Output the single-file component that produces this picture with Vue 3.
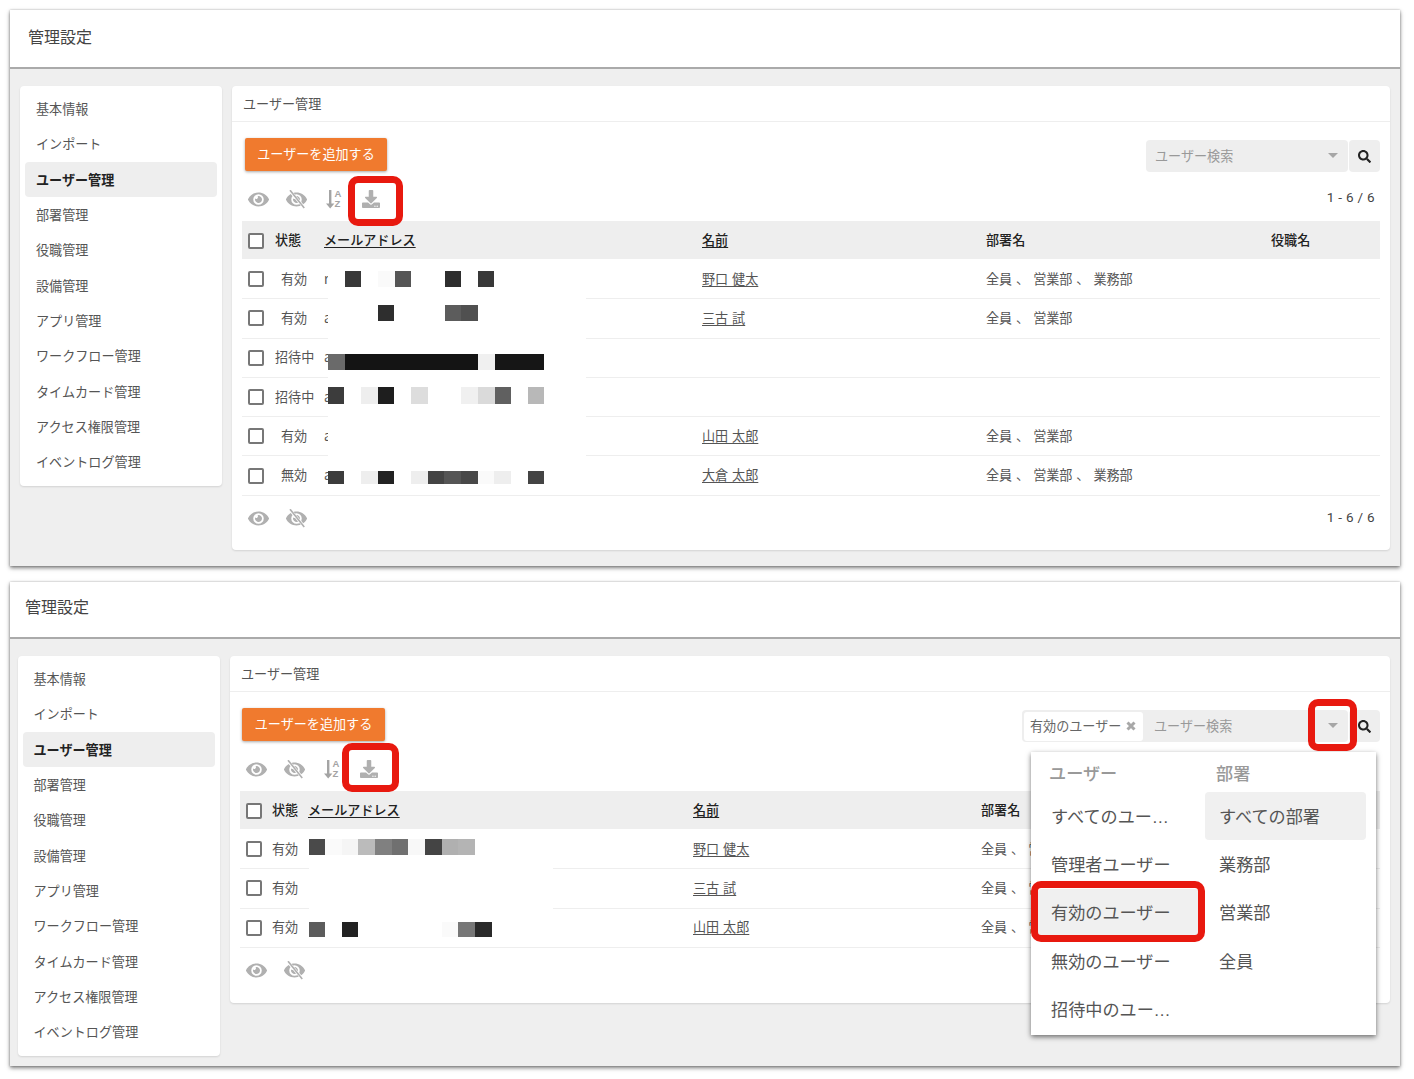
<script setup>
const eye = 'M572.52 241.4C518.29 135.59 410.93 64 288 64S57.68 135.64 3.48 241.41a32.35 32.35 0 0 0 0 29.19C57.71 376.41 165.07 448 288 448s230.32-71.64 284.52-177.41a32.35 32.35 0 0 0 0-29.19zM288 400a144 144 0 1 1 144-144 143.93 143.93 0 0 1-144 144zm0-240a95.31 95.31 0 0 0-25.31 3.79 47.85 47.85 0 0 1-66.9 66.9A95.78 95.78 0 1 0 288 160z'
const download = 'M216 0h80c13.3 0 24 10.7 24 24v168h87.7c17.8 0 26.7 21.5 14.1 34.1L269.7 378.3c-7.5 7.5-19.8 7.5-27.3 0L90.1 226.1c-12.6-12.6-3.7-34.1 14.1-34.1H192V24c0-13.3 10.7-24 24-24zm296 376v112c0 13.3-10.7 24-24 24H24c-13.3 0-24-10.7-24-24V376c0-13.3 10.7-24 24-24h146.7l49 49c20.1 20.1 52.5 20.1 72.6 0l49-49H488c13.3 0 24 10.7 24 24zm-124 88c0-11-9-20-20-20s-20 9-20 20 9 20 20 20 20-9 20-20zm64 0c0-11-9-20-20-20s-20 9-20 20 9 20 20 20 20-9 20-20z'
const search = 'M505 442.7L405.3 343c-4.5-4.5-10.6-7-17-7H372c27.6-35.3 44-79.7 44-128C416 93.1 322.9 0 208 0S0 93.1 0 208s93.1 208 208 208c48.3 0 92.7-16.4 128-44v16.3c0 6.4 2.5 12.5 7 17l99.7 99.7c9.4 9.4 24.6 9.4 33.9 0l28.3-28.3c9.4-9.4 9.4-24.6.1-34zM208 336c-70.7 0-128-57.2-128-128 0-70.7 57.2-128 128-128 70.7 0 128 57.2 128 128 0 70.7-57.2 128-128 128z'

const menu = ['基本情報', 'インポート', 'ユーザー管理', '部署管理', '役職管理', '設備管理', 'アプリ管理', 'ワークフロー管理', 'タイムカード管理', 'アクセス権限管理', 'イベントログ管理']

const b = (x, w, c) => ({ x, w, c })
const topMosaic = {
  box: { left: 328, top: 260, width: 258, height: 235 },
  strips: [
    { y: 271, h: 16, blocks: [b(345, 16, '#383838'), b(378, 17, '#fafafa'), b(395, 16, '#555'), b(445, 16, '#2e2e2e'), b(478, 16, '#383838')] },
    { y: 305, h: 16, blocks: [b(378, 16, '#2e2e2e'), b(445, 16, '#5c5c5c'), b(461, 17, '#505050')] },
    { y: 354, h: 16, blocks: [b(328, 17, '#6a6a6a'), b(345, 133, '#141414'), b(478, 17, '#f0f0f0'), b(495, 49, '#161616')] },
    { y: 387, h: 17, blocks: [b(328, 16, '#3c3c3c'), b(361, 17, '#eee'), b(378, 16, '#1e1e1e'), b(411, 17, '#ddd'), b(461, 17, '#f0f0f0'), b(478, 17, '#dadada'), b(495, 16, '#606060'), b(528, 16, '#b8b8b8')] },
    { y: 471, h: 13, blocks: [b(328, 16, '#3c3c3c'), b(361, 17, '#eee'), b(378, 16, '#222'), b(411, 17, '#eee'), b(428, 16, '#444'), b(444, 17, '#555'), b(461, 17, '#484848'), b(478, 16, '#fafafa'), b(494, 17, '#eee'), b(528, 16, '#444')] }
  ]
}
const bottomMosaic = {
  box: { left: 309, top: 830, width: 244, height: 117 },
  strips: [
    { y: 839, h: 16, blocks: [b(309, 16, '#4a4a4a'), b(325, 17, '#fafafa'), b(342, 16, '#f5f5f5'), b(358, 17, '#bbb'), b(375, 17, '#808080'), b(392, 16, '#707070'), b(408, 17, '#f8f8f8'), b(425, 17, '#444'), b(442, 16, '#b0b0b0'), b(458, 17, '#b4b4b4')] },
    { y: 922, h: 15, blocks: [b(309, 16, '#5c5c5c'), b(342, 16, '#222'), b(442, 16, '#fafafa'), b(458, 17, '#777'), b(475, 17, '#2a2a2a')] }
  ]
}

const panels = [
  {
    key: 'top',
    mosaic: topMosaic,
    filtered: false,
    rows: [
      { s: '有効', m: 'r', n: '野口 健太', d: '全員 、 営業部 、 業務部' },
      { s: '有効', m: 'a', n: '三古 試', d: '全員 、 営業部' },
      { s: '招待中', m: 'a', n: '', d: '' },
      { s: '招待中', m: 'a', n: '', d: '' },
      { s: '有効', m: 'a', n: '山田 太郎', d: '全員 、 営業部' },
      { s: '無効', m: 'a', n: '大倉 太郎', d: '全員 、 営業部 、 業務部' }
    ]
  },
  {
    key: 'bottom',
    mosaic: bottomMosaic,
    filtered: true,
    rows: [
      { s: '有効', m: '', n: '野口 健太', d: '全員 、 営業部 、 業務部' },
      { s: '有効', m: '', n: '三古 試', d: '全員 、 営業部' },
      { s: '有効', m: '', n: '山田 太郎', d: '全員 、 営業部' }
    ]
  }
]

const usersMenu = ['すべてのユーザー', '管理者ユーザー', '有効のユーザー', '無効のユーザー', '招待中のユーザー']
const deptMenu = ['すべての部署', '業務部', '営業部', '全員']

const boxStyle = (box) => ({ left: box.left + 'px', top: box.top + 'px', width: box.width + 'px', height: box.height + 'px' })
const blockStyle = (box, strip, block) => ({
  left: block.x - box.left + 'px',
  top: strip.y - box.top + 'px',
  width: block.w + 'px',
  height: strip.h + 'px',
  background: block.c
})
</script>

<template>
  <div class="page">
    <section v-for="p in panels" :key="p.key" class="win" :class="'win-' + p.key">
      <header class="win-head">管理設定</header>
      <div class="win-body">
        <nav class="side">
          <a v-for="m in menu" :key="m" class="side-item" :class="{ active: m === 'ユーザー管理' }">{{ m }}</a>
        </nav>
        <main class="card">
          <div class="card-head">ユーザー管理</div>
          <div class="card-body">
            <div class="bar">
              <button class="add">ユーザーを追加する</button>
              <div class="search">
                <div class="field">
                  <span v-if="p.filtered" class="chip">有効のユーザー<svg class="chip-x" viewBox="0 0 10 10"><path d="M1.5 1.5l7 7M8.5 1.5l-7 7" /></svg></span>
                  <span class="ph">ユーザー検索</span>
                  <span class="caret"></span>
                </div>
                <button class="go">
                  <svg viewBox="0 0 512 512" width="13" height="13"><path :d="search" fill="#222" /></svg>
                </button>
              </div>
            </div>

            <div class="tools">
              <svg class="ic-eye" viewBox="0 0 576 512"><path :d="eye" /></svg>
              <svg class="ic-eye ic-off" viewBox="0 0 576 512">
                <path :d="eye" />
                <path d="M90 0 L520 500" stroke="#fff" stroke-width="80" />
                <path d="M110 0 L500 490" stroke="#b0b0b0" stroke-width="44" />
              </svg>
              <svg class="ic-sort" viewBox="0 0 18 20">
                <path d="M5 1h2.4v13.4h3L6.2 19.4 2 14.4h3z" />
                <text x="10.4" y="8.2" class="az">A</text>
                <text x="10.4" y="18.4" class="az">Z</text>
              </svg>
              <span class="dl-wrap">
                <svg class="ic-dl" viewBox="0 0 512 512"><path :d="download" /></svg>
              </span>
              <span v-if="!p.filtered" class="count">1 - 6 / 6</span>
            </div>

            <div class="tbl">
              <div class="tr th">
                <span class="cb"></span>
                <span class="c-s">状態</span>
                <span class="c-m sort">メールアドレス</span>
                <span class="c-n sort">名前</span>
                <span class="c-d">部署名</span>
                <span class="c-r">役職名</span>
              </div>
              <div v-for="(r, i) in p.rows" :key="i" class="tr td">
                <span class="cb"></span>
                <span class="c-s st">{{ r.s }}</span>
                <span class="c-m">{{ r.m }}</span>
                <span class="c-n"><a class="lnk">{{ r.n }}</a></span>
                <span class="c-d">{{ r.d }}</span>
                <span class="c-r"></span>
              </div>
            </div>

            <div class="foot">
              <svg class="ic-eye" viewBox="0 0 576 512"><path :d="eye" /></svg>
              <svg class="ic-eye ic-off" viewBox="0 0 576 512">
                <path :d="eye" />
                <path d="M90 0 L520 500" stroke="#fff" stroke-width="80" />
                <path d="M110 0 L500 490" stroke="#b0b0b0" stroke-width="44" />
              </svg>
              <span v-if="!p.filtered" class="count">1 - 6 / 6</span>
            </div>
          </div>
        </main>
      </div>
    </section>

    <!-- redaction patches laid over the tables -->
    <template v-for="p in panels" :key="'m' + p.key">
      <div class="patch" :style="boxStyle(p.mosaic.box)">
        <template v-for="(s, si) in p.mosaic.strips" :key="si">
          <i v-for="(bk, bi) in s.blocks" :key="bi" class="px" :style="blockStyle(p.mosaic.box, s, bk)"></i>
        </template>
      </div>
    </template>

    <!-- filter dropdown -->
    <div class="drop">
      <div class="drop-col">
        <div class="drop-h">ユーザー</div>
        <div v-for="u in usersMenu" :key="u" class="drop-i" :class="{ on: u === '有効のユーザー' }"><span class="trunc">{{ u }}</span></div>
      </div>
      <div class="drop-col dept">
        <div class="drop-h">部署</div>
        <div v-for="d in deptMenu" :key="d" class="drop-i" :class="{ on: d === 'すべての部署' }"><span class="trunc">{{ d }}</span></div>
      </div>
    </div>

    <!-- red annotation frames -->
    <i class="mark m1"></i>
    <i class="mark m2"></i>
    <i class="mark m3"></i>
    <i class="mark m4"></i>
  </div>
</template>

<style>
html, body { margin: 0; background: #fff; }
</style>

<style scoped>
.page {
  position: relative;
  width: 1414px;
  height: 1079px;
  overflow: hidden;
  padding: 10px 14px 0 10px;
  box-sizing: border-box;
  display: flex;
  flex-direction: column;
  gap: 16px;
  font-family: "Noto Sans CJK JP", Roboto, sans-serif;
  font-size: 13.1px;
  color: #555;
}
.win {
  background: #efefef;
  box-shadow: 0 2px 4px rgba(0, 0, 0, .5), 0 0 2px rgba(0, 0, 0, .25);
  display: flex;
  flex-direction: column;
}
.win-top { height: 556px; }
.win-bottom { height: 484px; }
.win-head {
  background: #fff;
  height: 43px;
  padding: 14px 18px 0;
  font-size: 16px;
  line-height: 24px;
  color: #444;
  border-bottom: 2px solid #aaa;
  flex: none;
}
.win-bottom .win-head { height: 43px; padding: 12px 15px 0; }
.win-body {
  display: flex;
  align-items: flex-start;
  gap: 10px;
  padding: 17px 10px 0;
}
.win-bottom .win-body { padding-left: 7.5px; gap: 10.5px; }
.side {
  width: 202px;
  flex: none;
  background: #fff;
  border-radius: 4px;
  padding: 5px 5px 7px;
  box-sizing: border-box;
  box-shadow: 0 1px 2px rgba(0, 0, 0, .12);
}
.side-item {
  display: flex;
  align-items: center;
  height: 35.3px;
  padding-left: 11px;
  border-radius: 4px;
  color: #555;
}
.side-item.active { background: #eee; color: #222; font-weight: 700; }
.card {
  flex: 1;
  min-width: 0;
  background: #fff;
  border-radius: 4px;
  box-shadow: 0 1px 2px rgba(0, 0, 0, .12);
}
.card-head {
  height: 35px;
  line-height: 35px;
  padding-left: 11px;
  border-bottom: 1px solid #eee;
}
.card-body { padding: 16px 10px 0; }
.bar {
  display: flex;
  justify-content: space-between;
  align-items: flex-start;
}
.add {
  margin-left: 3px;
  height: 33px;
  width: 142px;
  padding: 0 0 2px;
  border: 0;
  border-radius: 2px;
  background: #f07a2e;
  color: #fff;
  font: inherit;
  box-shadow: 0 1px 3px rgba(0, 0, 0, .35);
}
.win-bottom .add { margin-left: 2px; width: 143px; }
.search {
  display: flex;
  gap: 1px;
  margin-top: 2px;
  height: 32px;
}
.field {
  width: 202px;
  background: #eee;
  border-radius: 4px;
  display: flex;
  align-items: center;
  padding-left: 9px;
  box-sizing: border-box;
  position: relative;
  color: #999;
}
.ph { margin-top: -2px; }
.win-bottom .field { width: 326px; padding-left: 2px; }
.caret {
  position: absolute;
  right: 10px;
  top: 13px;
  border: 5px solid transparent;
  border-top: 5px solid #a6a6a6;
  border-bottom: 0;
}
.chip {
  display: inline-flex;
  align-items: center;
  width: 119px;
  height: 29px;
  margin-right: 11px;
  padding-left: 6px;
  padding-bottom: 2px;
  box-sizing: border-box;
  background: #fff;
  border-radius: 3px;
  color: #666;
  white-space: nowrap;
}
.chip-x { flex: none; width: 10px; height: 10px; margin: 2px 0 0 5px; fill: none; stroke: #a8a8a8; stroke-width: 3; }
.go {
  width: 31px;
  padding: 0;
  border: 0;
  background: #eee;
  border-radius: 4px;
  display: flex;
  align-items: center;
  justify-content: center;
}
.tools, .foot {
  position: relative;
  display: flex;
  align-items: center;
  padding-left: 6px;
}
.tools { height: 49px; padding-top: 5px; box-sizing: border-box; }
.foot { height: 54px; align-items: flex-start; padding-top: 13px; box-sizing: border-box; }
.win-bottom .foot { height: 55px; }
.ic-eye { width: 21px; height: 19px; fill: #b0b0b0; flex: none; margin-right: 17px; }
.ic-sort { width: 18px; height: 20px; fill: #a4a4a4; flex: none; margin-right: 20px; }
.az { font: 700 9.5px "Liberation Sans", sans-serif; }
.dl-wrap { display: flex; }
.ic-dl { width: 18px; height: 18px; fill: #b0b0b0; }
.count {
  position: absolute;
  right: 5px;
  top: 17px;
  font-family: Roboto, sans-serif;
  font-size: 13.5px;
  line-height: 16px;
  letter-spacing: .3px;
  color: #444;
}
.foot .count { top: 13px; }

.tr {
  display: grid;
  grid-template-columns: 33px 49px 378px 284px 285px 1fr;
  align-items: center;
}
.win-bottom .tr { grid-template-columns: 32px 36px 385px 288px 288px 1fr; }
.th {
  height: 38px;
  margin-bottom: 1px;
  padding-bottom: 1px;
  box-sizing: border-box;
  background: #eee;
  color: #222;
  font-weight: 500;
}
.td {
  height: 39.3px;
  padding-bottom: 2px;
  border-bottom: 1px solid #eee;
  box-sizing: border-box;
  color: #555;
  word-spacing: 1px;
}
.cb {
  width: 12px;
  height: 12px;
  margin: 2px 0 0 6px;
  border: 2px solid #777;
  border-radius: 2px;
  background: #fff;
  display: block;
}
.st { text-align: center; width: 38px; margin-left: 0; }
.win-bottom .st { text-align: left; width: auto; }
.sort { text-decoration: underline; text-underline-offset: 2px; }
.lnk { color: #555; text-decoration: underline; text-underline-offset: 2px; }
.c-m, .c-d, .c-n, .c-r, .c-s { white-space: nowrap; }

.patch { position: absolute; background: #fff; }
.px { position: absolute; display: block; }

.drop {
  position: absolute;
  left: 1031px;
  top: 752px;
  width: 345px;
  height: 283px;
  background: #fff;
  display: flex;
  box-shadow: 0 2px 5px rgba(0, 0, 0, .55);
  font-size: 17.15px;
  color: #555;
}
.drop-col { flex: none; width: 168px; padding-top: 3px; padding-left: 7px; box-sizing: border-box; }
.drop-col.dept { width: 177px; padding-left: 6px; }
.drop-h {
  height: 37px;
  line-height: 35px;
  padding-left: 11px;
  color: #999;
  font-weight: 500;
}
.drop-i {
  height: 48.3px;
  display: flex;
  align-items: center;
  padding-left: 13px;
  border-radius: 4px;
}
.dept .drop-i { width: 161px; padding-left: 14px; box-sizing: border-box; }
.drop-i.on { background: #f0f0f0; }
.trunc {
  display: block;
  max-width: 121px;
  margin-top: -2px;
  overflow: hidden;
  white-space: nowrap;
  text-overflow: ellipsis;
  font-family: "Liberation Sans", "Noto Sans CJK JP", sans-serif;
}
.dept .trunc { max-width: 140px; }

.mark {
  position: absolute;
  display: block;
  box-sizing: border-box;
  border: 7px solid #e8190f;
  border-radius: 10px;
}
.m1 { left: 348px; top: 176px; width: 55px; height: 50px; }
.m2 { left: 342px; top: 743px; width: 57px; height: 49px; }
.m3 { left: 1308px; top: 699px; width: 49px; height: 52px; }
.m4 { left: 1031px; top: 881px; width: 174px; height: 61px; }
</style>
